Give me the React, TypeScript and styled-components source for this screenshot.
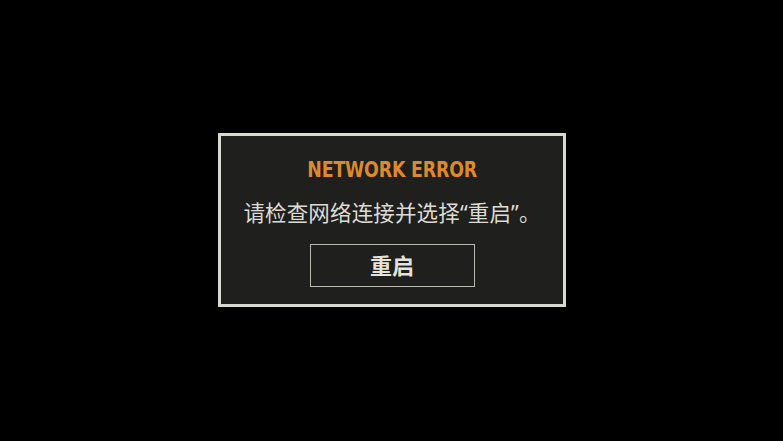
import React from "react";
import styled, { createGlobalStyle } from "styled-components";

const Global = createGlobalStyle`
  html, body { margin: 0; padding: 0; background: #000; }
  body { width: 783px; height: 441px; overflow: hidden; }
  #root { width: 100%; height: 100%; }
`;

const Screen = styled.div`
  width: 783px;
  height: 441px;
  background: #000;
  display: flex;
  align-items: flex-start;
  justify-content: center;
  padding-top: 133px;
  box-sizing: border-box;
  padding-left: 1px;
`;

const Dialog = styled.div`
  width: 348px;
  height: 174px;
  box-sizing: border-box;
  border: 3px solid #d9d9d1;
  background: #1f1f1d;
  display: flex;
  flex-direction: column;
  align-items: center;
  padding-top: 20px;
`;

const Title = styled.div`
  font-family: "DejaVu Sans Condensed", "Liberation Sans Narrow", sans-serif;
  font-weight: 700;
  font-size: 21px;
  line-height: 28px;
  color: #dc8a2c;
  letter-spacing: -0.2px;
  transform: scaleX(0.92);
`;

const Message = styled.div`
  margin-top: 14px;
  font-family: "Noto Sans CJK SC", "Noto Sans", sans-serif;
  font-size: 21.5px;
  line-height: 28px;
  letter-spacing: 0.15px;
  color: #dcdcd4;
`;

const Quote = styled.span`
  font-family: "Noto Sans", sans-serif;
`;

const Button = styled.button`
  margin-top: 17px;
  width: 165px;
  height: 43px;
  box-sizing: border-box;
  background: transparent;
  border: 1.5px solid #b9b9af;
  display: flex;
  align-items: center;
  justify-content: center;
  font-family: "Noto Sans CJK SC", sans-serif;
  font-weight: 700;
  font-size: 22px;
  color: #e4e4dc;
  padding: 0 0 4px;
  cursor: pointer;
`;

export default function App() {
  return (
    <>
      <Global />
      <Screen>
        <Dialog>
          <Title>NETWORK ERROR</Title>
          <Message>
            请检查网络连接并选择<Quote>“</Quote>重启<Quote>”</Quote>。
          </Message>
          <Button>重启</Button>
        </Dialog>
      </Screen>
    </>
  );
}
